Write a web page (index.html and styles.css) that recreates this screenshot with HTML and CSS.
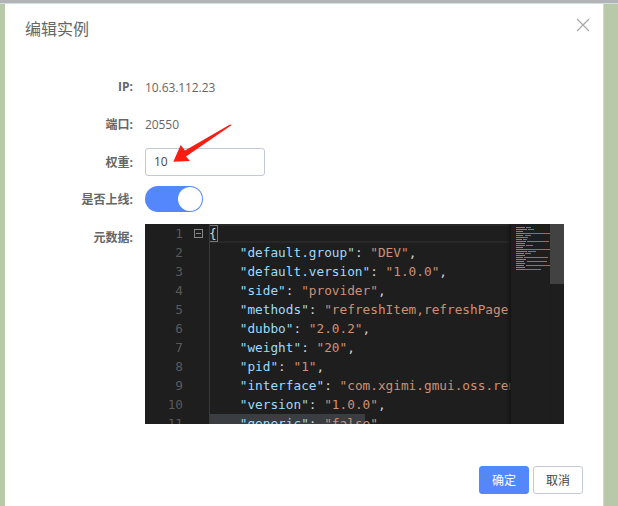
FILE: index.html
```html
<!DOCTYPE html>
<html lang="zh-CN">
<head>
<meta charset="utf-8">
<title>编辑实例</title>
<link rel="stylesheet" href="styles.css">
</head>
<body>
<div class="topbar"></div>
<div class="modal">
  <header class="modal-head">
    <h1 class="modal-title">编辑实例</h1>
    <svg class="close" width="14" height="14" viewBox="0 0 14 14"><path d="M1 1 13 13M13 1 1 13" stroke="#a8a8a8" stroke-width="1.2" fill="none"/></svg>
  </header>
  <div class="form">
    <div class="row row-ip"><span class="label">IP:</span><span class="value">10.63.112.23</span></div>
    <div class="row row-port"><span class="label label-cjk">端口:</span><span class="value">20550</span></div>
    <div class="row row-weight"><span class="label label-cjk">权重:</span><div class="input">10</div></div>
    <div class="row row-switch"><span class="label label-cjk">是否上线:</span><div class="switch"><div class="knob"></div></div></div>
    <div class="row row-editor">
      <span class="label">元数据:</span>
      <div class="editor">
        <div class="gutter">
          <div class="ln">1<span class="fold"></span></div><div class="ln">2</div><div class="ln">3</div><div class="ln">4</div><div class="ln">5</div><div class="ln">6</div><div class="ln">7</div><div class="ln">8</div><div class="ln">9</div><div class="ln">10</div><div class="ln">11</div>
        </div>
        <div class="code">
          <div class="cl current"><span class="brace">{</span></div>
          <div class="cl">    <span class="k">"default.group"</span>: <span class="s">"DEV"</span>,</div>
          <div class="cl">    <span class="k">"default.version"</span>: <span class="s">"1.0.0"</span>,</div>
          <div class="cl">    <span class="k">"side"</span>: <span class="s">"provider"</span>,</div>
          <div class="cl">    <span class="k">"methods"</span>: <span class="s">"refreshItem,refreshPage,refreshAll"</span>,</div>
          <div class="cl">    <span class="k">"dubbo"</span>: <span class="s">"2.0.2"</span>,</div>
          <div class="cl">    <span class="k">"weight"</span>: <span class="s">"20"</span>,</div>
          <div class="cl">    <span class="k">"pid"</span>: <span class="s">"1"</span>,</div>
          <div class="cl">    <span class="k">"interface"</span>: <span class="s">"com.xgimi.gmui.oss.remote.Service"</span>,</div>
          <div class="cl">    <span class="k">"version"</span>: <span class="s">"1.0.0"</span>,</div>
          <div class="cl hl">    <span class="k">"generic"</span>: <span class="s">"false"</span>,</div>
        </div>
        <div class="minimap">
          <svg width="39" height="50" viewBox="0 0 39 50">
            <g fill="#5f8fa8">
              <rect x="5" y="3" width="9" height="1"/><rect x="5" y="5" width="11" height="1"/><rect x="5" y="7" width="7" height="1"/><rect x="5" y="9" width="9" height="1"/><rect x="5" y="11" width="7" height="1"/><rect x="5" y="13" width="8" height="1"/><rect x="5" y="15" width="6" height="1"/><rect x="5" y="17" width="10" height="1"/><rect x="5" y="19" width="9" height="1"/><rect x="5" y="21" width="9" height="1"/><rect x="5" y="23" width="7" height="1"/><rect x="5" y="25" width="9" height="1"/><rect x="5" y="27" width="11" height="1"/><rect x="5" y="29" width="8" height="1"/><rect x="5" y="31" width="9" height="1"/><rect x="5" y="33" width="7" height="1"/><rect x="5" y="35" width="10" height="1"/><rect x="5" y="37" width="8" height="1"/><rect x="5" y="39" width="9" height="1"/><rect x="5" y="41" width="8" height="1"/><rect x="5" y="43" width="9" height="1"/><rect x="5" y="45" width="9" height="1"/>
            </g>
            <g fill="#96705c">
              <rect x="15" y="3" width="5" height="1"/><rect x="17" y="5" width="6" height="1"/><rect x="13" y="9" width="26" height="1"/><rect x="14" y="11" width="6" height="1"/><rect x="13" y="13" width="4" height="1"/><rect x="12" y="15" width="4" height="1"/><rect x="16" y="17" width="22" height="1"/><rect x="15" y="21" width="7" height="1"/><rect x="13" y="25" width="26" height="1"/><rect x="17" y="27" width="8" height="1"/><rect x="14" y="29" width="6" height="1"/><rect x="13" y="33" width="24" height="1"/><rect x="16" y="37" width="20" height="1"/><rect x="15" y="41" width="26" height="1"/><rect x="14" y="45" width="16" height="1"/>
            </g>
          </svg>
        </div>
        <div class="slider"></div>
      </div>
    </div>
  </div>
  <footer class="modal-foot">
    <button class="btn btn-primary">确定</button>
    <button class="btn">取消</button>
  </footer>
  <svg class="arrow" width="62" height="40" viewBox="0 0 62 40"><polygon points="59.700,1 14,32.500 18,37 1.300,37.700 8.700,21 13,26.500 58,0.500" fill="#fb1d12"/></svg>
</div>
</body>
</html>
```
FILE: styles.css
```css
html, body { margin: 0; padding: 0; }
body {
  width: 618px;
  height: 506px;
  overflow: hidden;
  background: #b8c9a9;
  font-family: "Open Sans", "Noto Sans CJK SC", sans-serif;
  font-size: 12px;
  color: #666;
}
.topbar { height: 3px; background: #b2b3b6; border-bottom: 1px solid #d4e0dc; }
.modal {
  position: relative;
  margin-left: 5px;
  width: 598px;
  height: 502px;
  background: #fff;
  box-shadow: 1px 0 0 #d4d6d2;
  display: flex;
  flex-direction: column;
}
.modal-head { height: 64px; position: relative; padding: 13px 20px 0; box-sizing: border-box; }
.modal-title { margin: 0; font-size: 16px; font-weight: 400; line-height: 24px; color: #666; }
.close { position: absolute; top: 14px; right: 13px; }
.form { flex: 1; display: flex; flex-direction: column; }
.row { display: flex; align-items: center; }
.row-ip { height: 38px; }
.row-port { height: 36px; }
.row-weight { height: 40px; }
.row-switch { height: 34px; }
.row-editor { height: 200px; align-items: flex-start; margin-top: 8px; }
.label { width: 128px; text-align: right; font-weight: 700; color: #666; margin-right: 12px; line-height: 28px; flex: none; }
.label-cjk { padding-top: 2px; }
.value { color: #666; letter-spacing: -0.08px; }
.input {
  width: 120px;
  height: 28px;
  box-sizing: border-box;
  border: 1px solid #c5c8d6;
  border-radius: 3px;
  padding-left: 8px;
  line-height: 26px;
  color: #444;
}
.switch {
  width: 58px;
  height: 26px;
  border-radius: 13px;
  background: #5487fb;
  position: relative;
}
.knob {
  position: absolute;
  right: 1px;
  top: 1px;
  width: 24px;
  height: 24px;
  border-radius: 50%;
  background: #fff;
}
.editor {
  width: 419px;
  height: 200px;
  background: #1e1e1e;
  display: flex;
  overflow: hidden;
  position: relative;
  font-family: "DejaVu Sans Mono", monospace;
  font-size: 12.75px;
  line-height: 19px;
}
.gutter { width: 65px; flex: none; text-align: right; color: #5a5a5a; padding-right: 26px; box-sizing: border-box; border-right: 1px solid #3a3a3a; }
.ln { height: 19px; position: relative; }
.fold {
  position: absolute;
  left: 49px;
  top: 5px;
  width: 9px;
  height: 9px;
  box-sizing: border-box;
  border: 1px solid #888;
  background: linear-gradient(#888, #888) center / 5px 1px no-repeat;
}
.code { width: 301px; flex: none; overflow: hidden; color: #d4d4d4; }
.cl { height: 19px; white-space: pre; text-indent: -1px; }
.current { box-sizing: border-box; border-top: 2px solid #282828; border-bottom: 2px solid #282828; line-height: 15px; }
.brace { outline: 1px solid #777; display: inline-block; height: 15px; margin-left: 1px; }
.k { color: #9cdcfe; }
.s { color: #ce9178; }
.hl { background: linear-gradient(#3a3d41, #3a3d41) 0 0 / 155px 100% no-repeat; }
.minimap { width: 39px; flex: none; box-shadow: -2px 0 3px #141414; }
.slider { width: 14px; height: 60px; background: #424242; flex: none; }
.modal-foot { display: flex; justify-content: flex-end; gap: 4px; padding: 0 20px 12px; }
.btn {
  width: 50px;
  height: 28px;
  box-sizing: border-box;
  background: #fff;
  border: 1px solid #c5c8d6;
  border-radius: 3px;
  font: 12px "Open Sans", "Noto Sans CJK SC", sans-serif;
  color: #444;
  padding: 0;
}
.btn-primary { background: #5487fb; border-color: #5487fb; color: #fff; }
.arrow { position: absolute; left: 167px; top: 120px; }
```
